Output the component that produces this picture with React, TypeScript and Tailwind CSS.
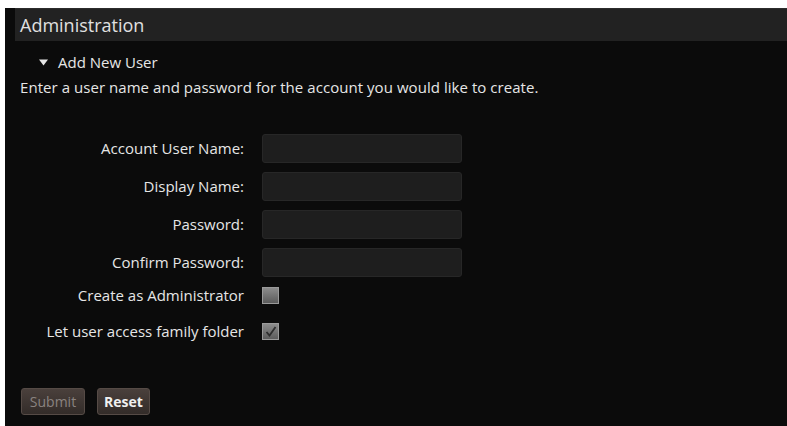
import React from "react";

const fields = ["Account User Name:", "Display Name:", "Password:", "Confirm Password:"];

export default function App() {
  return (
    <div className="h-screen w-full bg-white pt-[8px] pl-[5px] font-['Open_Sans',sans-serif]">
      <div className="h-full bg-[#0b0b0b] flex flex-col">
        {/* Header */}
        <div className="ml-[10px] h-[33px] bg-[#222222] border-t border-[#2c2c2c] flex items-center pl-[5px]">
          <span className="text-[18px] text-[#e0e0e0]">Administration</span>
        </div>

        {/* Section toggle */}
        <div className="flex items-center h-[24px] mt-[9px] pl-[34px] text-[15px] text-[#e6e6e6]">
          <svg width="9" height="7" viewBox="0 0 9 7" className="mr-[10px]">
            <path d="M0 0.5 L9 0.5 L4.5 6.5 Z" fill="#e6e6e6" />
          </svg>
          Add New User
        </div>
        <p className="pl-[15px] mt-[2px] h-[22px] leading-[22px] text-[15px] text-[#e6e6e6] tracking-[0.05px]">
          Enter a user name and password for the account you would like to create.
        </p>

        {/* Text fields */}
        <div className="mt-[36px] flex flex-col gap-[9px]">
          {fields.map((f) => (
            <div key={f} className="flex items-center">
              <label className="w-[239px] text-right text-[15px] text-[#e6e6e6]">{f}</label>
              <input
                type={f.includes("Password") ? "password" : "text"}
                className="ml-[18px] w-[200px] h-[29px] rounded-[3px] bg-[#1e1e1e] border border-[#272727] outline-none"
              />
            </div>
          ))}
        </div>

        {/* Checkboxes */}
        <div className="mt-[4px] flex flex-col gap-[8px]">
          <div className="flex items-center h-[28px]">
            <span className="w-[239px] text-right text-[15px] text-[#e6e6e6]">Create as Administrator</span>
            <span className="ml-[18px] w-[17px] h-[17px] bg-gradient-to-b from-[#8c8c8c] to-[#5c5c5c] border border-[#9a9a9a]" />
          </div>
          <div className="flex items-center h-[28px]">
            <span className="w-[239px] text-right text-[15px] text-[#e6e6e6]">Let user access family folder</span>
            <span className="ml-[18px] w-[17px] h-[17px] bg-gradient-to-b from-[#8c8c8c] to-[#5c5c5c] border border-[#9a9a9a] flex items-center justify-center">
              <svg width="12" height="11" viewBox="0 0 12 11">
                <path d="M1.5 6 L4.5 9.5 L10.5 1" fill="none" stroke="#2e2e2e" strokeWidth="1.8" />
              </svg>
            </span>
          </div>
        </div>

        {/* Buttons */}
        <div className="mt-auto mb-[11px] ml-[16px] flex gap-[12px]">
          <button className="w-[64px] h-[27px] rounded-[3px] bg-gradient-to-b from-[#4a403c] to-[#332c29] border border-[#564b46] text-[14px] text-[#8a8380]">
            Submit
          </button>
          <button className="w-[53px] h-[27px] rounded-[3px] bg-gradient-to-b from-[#4a403c] to-[#332c29] border border-[#564b46] text-[14px] font-bold text-[#f0f0f0]">
            Reset
          </button>
        </div>
      </div>
    </div>
  );
}
